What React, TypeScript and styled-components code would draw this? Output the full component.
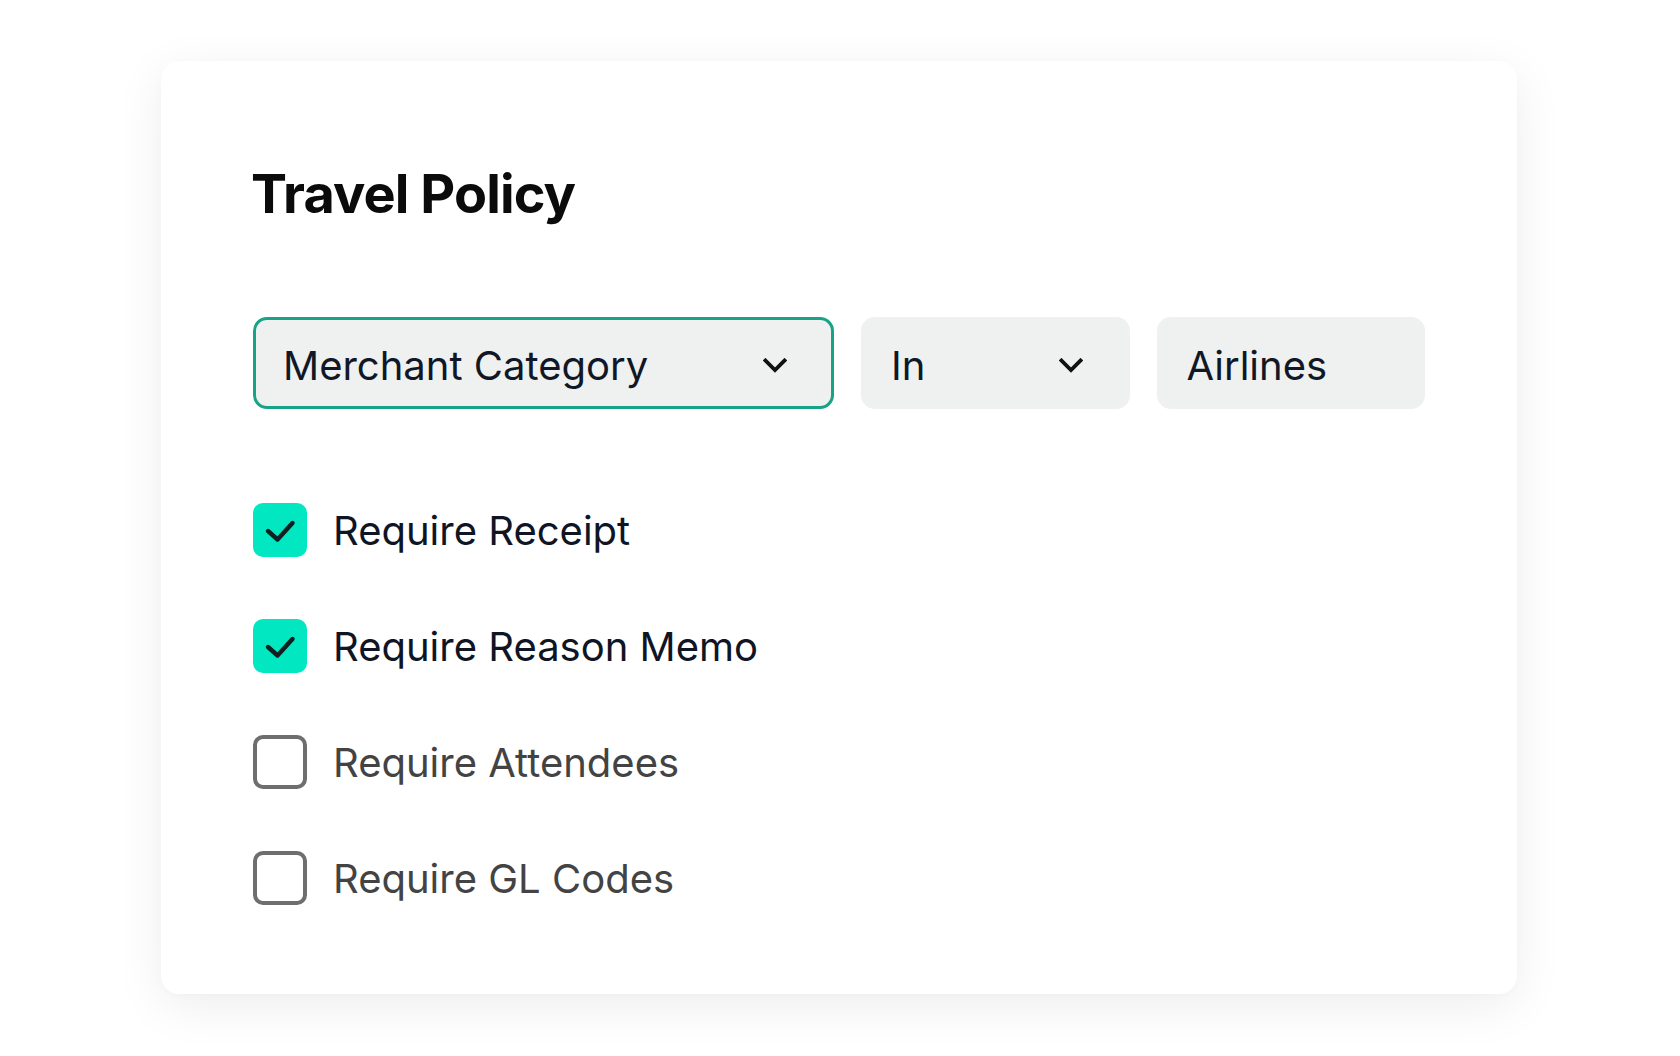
import React from 'react'
import styled, { createGlobalStyle } from 'styled-components'

const GlobalStyle = createGlobalStyle`
  html, body {
    margin: 0;
    padding: 0;
    background: #ffffff;
  }
  body {
    font-family: Inter, "Noto Sans", "Liberation Sans", sans-serif;
    -webkit-font-smoothing: antialiased;
  }
`

const Page = styled.div`
  display: flex;
  align-items: flex-start;
  padding: 61px 0 62px 161px;
  min-height: 1056px;
  box-sizing: border-box;
`

const Card = styled.section`
  width: 1356px;
  box-sizing: border-box;
  padding: 106px 92px 89px;
  background: #ffffff;
  border-radius: 18px;
  box-shadow: 0 12px 50px rgba(20, 20, 30, 0.07), 0 2px 8px rgba(20, 20, 30, 0.02);
`

const Title = styled.h1`
  margin: 0 0 96px -2px;
  font-size: 54px;
  line-height: 54px;
  font-weight: 700;
  letter-spacing: -0.9px;
  color: #0b0b0c;
`

const FilterRow = styled.div`
  display: grid;
  grid-template-columns: 581px 1fr 1fr;
  gap: 27px;
  height: 92px;
`

const Field = styled.div<{ $active?: boolean }>`
  display: flex;
  align-items: center;
  justify-content: space-between;
  box-sizing: border-box;
  padding: 5px 44px 0 27px;
  background: #eef1f0;
  border: ${({ $active }) => ($active ? '3px solid #17a387' : '3px solid transparent')};
  border-radius: 14px;
  font-size: 40px;
  font-weight: 400;
  color: #111726;
  letter-spacing: 0;
`

const Chevron = styled.svg`
  width: 24px;
  height: 15px;
  flex: none;
`

const Options = styled.div`
  display: flex;
  flex-direction: column;
  gap: 62px;
  margin-top: 94px;
`

const Option = styled.label`
  display: flex;
  align-items: center;
  gap: 26px;
`

const Box = styled.span<{ $checked?: boolean }>`
  width: 54px;
  height: 54px;
  box-sizing: border-box;
  border-radius: 10px;
  flex: none;
  display: flex;
  align-items: center;
  justify-content: center;
  background: ${({ $checked }) => ($checked ? '#00e7c2' : '#ffffff')};
  border: ${({ $checked }) => ($checked ? 'none' : '4px solid #6e6e6e')};
`

const Label = styled.span<{ $checked?: boolean }>`
  font-size: 40px;
  font-weight: 400;
  letter-spacing: 0;
  color: ${({ $checked }) => ($checked ? '#0f1524' : '#434343')};
`

const ChevronDown = () => (
  <Chevron viewBox="0 0 24 15" fill="none">
    <path d="M2.5 2.5 L12 12 L21.5 2.5" stroke="#111111" strokeWidth="3.8" strokeLinecap="square" />
  </Chevron>
)

const Check = () => (
  <svg width="54" height="54" viewBox="0 0 54 54" fill="none">
    <path d="M15 28 L24.5 36.5 L39.5 20" stroke="#102020" strokeWidth="4.4" strokeLinecap="round" strokeLinejoin="round" />
  </svg>
)

const options = [
  { label: 'Require Receipt', checked: true },
  { label: 'Require Reason Memo', checked: true },
  { label: 'Require Attendees', checked: false },
  { label: 'Require GL Codes', checked: false },
]

export default function App() {
  return (
    <>
      <GlobalStyle />
      <Page>
        <Card>
          <Title>Travel Policy</Title>
          <FilterRow>
            <Field $active>
              <span>Merchant Category</span>
              <ChevronDown />
            </Field>
            <Field>
              <span>In</span>
              <ChevronDown />
            </Field>
            <Field>
              <span>Airlines</span>
            </Field>
          </FilterRow>
          <Options>
            {options.map((o) => (
              <Option key={o.label}>
                <Box $checked={o.checked}>{o.checked && <Check />}</Box>
                <Label $checked={o.checked}>{o.label}</Label>
              </Option>
            ))}
          </Options>
        </Card>
      </Page>
    </>
  )
}
